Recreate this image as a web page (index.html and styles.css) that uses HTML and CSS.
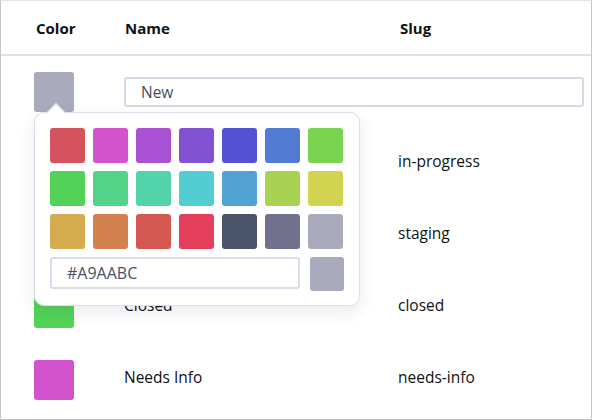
FILE: index.html
```html
<!DOCTYPE html>
<html>
<head>
<meta charset="utf-8">
<link rel="stylesheet" href="styles.css">
</head>
<body>
<div class="frame">
  <div class="row head">
    <div class="cell">Color</div>
    <div class="cell">Name</div>
    <div class="cell">Slug</div>
  </div>

  <div class="row">
    <div class="cell color-cell">
      <div class="swatch" style="background:#a9aabc"></div>
      <div class="popover">
        <div class="arrow"></div>
        <div class="palette">
          <span class="chip" style="background:#d5525f"></span>
          <span class="chip" style="background:#d352ce"></span>
          <span class="chip" style="background:#a852d3"></span>
          <span class="chip" style="background:#8352d3"></span>
          <span class="chip" style="background:#5452d3"></span>
          <span class="chip" style="background:#527bd3"></span>
          <span class="chip" style="background:#7bd352"></span>
          <span class="chip" style="background:#52d357"></span>
          <span class="chip" style="background:#52d387"></span>
          <span class="chip" style="background:#52d3aa"></span>
          <span class="chip" style="background:#52ced3"></span>
          <span class="chip" style="background:#52a2d3"></span>
          <span class="chip" style="background:#a8d352"></span>
          <span class="chip" style="background:#d3d352"></span>
          <span class="chip" style="background:#d4ac4e"></span>
          <span class="chip" style="background:#d3814e"></span>
          <span class="chip" style="background:#d35852"></span>
          <span class="chip" style="background:#e33f5a"></span>
          <span class="chip" style="background:#4a556b"></span>
          <span class="chip" style="background:#71718e"></span>
          <span class="chip" style="background:#a9aabc"></span>
        </div>
        <div class="hex-row">
          <input class="hex" type="text" value="#A9AABC">
          <span class="preview" style="background:#a9aabc"></span>
        </div>
      </div>
    </div>
    <div class="cell span2">
      <input class="name-input" type="text" value="New">
    </div>
  </div>

  <div class="row">
    <div class="cell"><div class="swatch" style="background:#527bd3"></div></div>
    <div class="cell text">In Progress</div>
    <div class="cell text">in-progress</div>
  </div>

  <div class="row">
    <div class="cell"><div class="swatch" style="background:#d4ac4e"></div></div>
    <div class="cell text">Staging</div>
    <div class="cell text">staging</div>
  </div>

  <div class="row">
    <div class="cell"><div class="swatch" style="background:#52d357"></div></div>
    <div class="cell text">Closed</div>
    <div class="cell text">closed</div>
  </div>

  <div class="row">
    <div class="cell"><div class="swatch" style="background:#d352ce"></div></div>
    <div class="cell text">Needs Info</div>
    <div class="cell text">needs-info</div>
  </div>
</div>
</body>
</html>
```

FILE: styles.css
```css
html, body {
  margin: 0;
  padding: 0;
  background: #ffffff;
}

.frame {
  box-sizing: border-box;
  width: 592px;
  height: 420px;
  border: 1px solid #c6c6c6;
  border-top-color: #e4e4e4;
  font-family: "Open Sans", "Noto Sans", sans-serif;
  font-size: 15px;
  color: #111111;
}

.row {
  display: grid;
  grid-template-columns: 90px 274px 1fr;
  padding: 16px 7px 16px 33px;
  height: 40px;
  align-items: center;
}

.row.head {
  height: 53px;
  padding-top: 0;
  padding-bottom: 0;
  border-bottom: 2px solid #e0e1e7;
  font-weight: 700;
  font-size: 15px;
  padding-left: 35px;
}

.row.head .cell:nth-child(2) { margin-left: -1px; }

.cell.text {
  font-size: 15.5px;
  padding-bottom: 6px;
}

.span2 {
  grid-column: 2 / 4;
}

.color-cell {
  position: relative;
  height: 40px;
}

.swatch {
  width: 40px;
  height: 40px;
  border-radius: 3px;
}

.name-input {
  box-sizing: border-box;
  width: 100%;
  height: 30px;
  margin: 0;
  border: 2px solid #d7dae6;
  border-radius: 3px;
  padding: 0 15px;
  font-family: "Open Sans", "Noto Sans", sans-serif;
  font-size: 15.5px;
  color: #4b4d5c;
  outline: none;
  background: #fff;
}

.popover {
  position: absolute;
  left: 0;
  top: 40px;
  width: 326px;
  box-sizing: border-box;
  padding: 15px 15px 14px 15px;
  background: #ffffff;
  border: 1px solid #dcdfe9;
  border-radius: 10px;
  box-shadow: 0 6px 16px rgba(40, 50, 90, 0.10);
  z-index: 5;
}

.arrow {
  position: absolute;
  left: 14px;
  top: -7px;
  width: 13px;
  height: 13px;
  background: #ffffff;
  border-top: 1px solid #dcdfe9;
  border-left: 1px solid #dcdfe9;
  transform: rotate(45deg);
}

.palette {
  display: grid;
  grid-template-columns: repeat(7, 35px);
  grid-auto-rows: 35px;
  gap: 8px;
}

.chip {
  display: block;
  border-radius: 3px;
}

.hex-row {
  display: flex;
  align-items: flex-start;
  gap: 10px;
  margin-top: 8px;
}

.hex {
  box-sizing: border-box;
  flex: 1;
  min-width: 0;
  height: 32px;
  margin: 0;
  border: 2px solid #d9dce8;
  border-radius: 3px;
  padding: 0 15px;
  font-family: "Open Sans", "Noto Sans", sans-serif;
  font-size: 16px;
  color: #4a5066;
  outline: none;
  background: #fff;
}

.preview {
  display: block;
  width: 34px;
  height: 34px;
  border-radius: 3px;
  flex: none;
}
```
